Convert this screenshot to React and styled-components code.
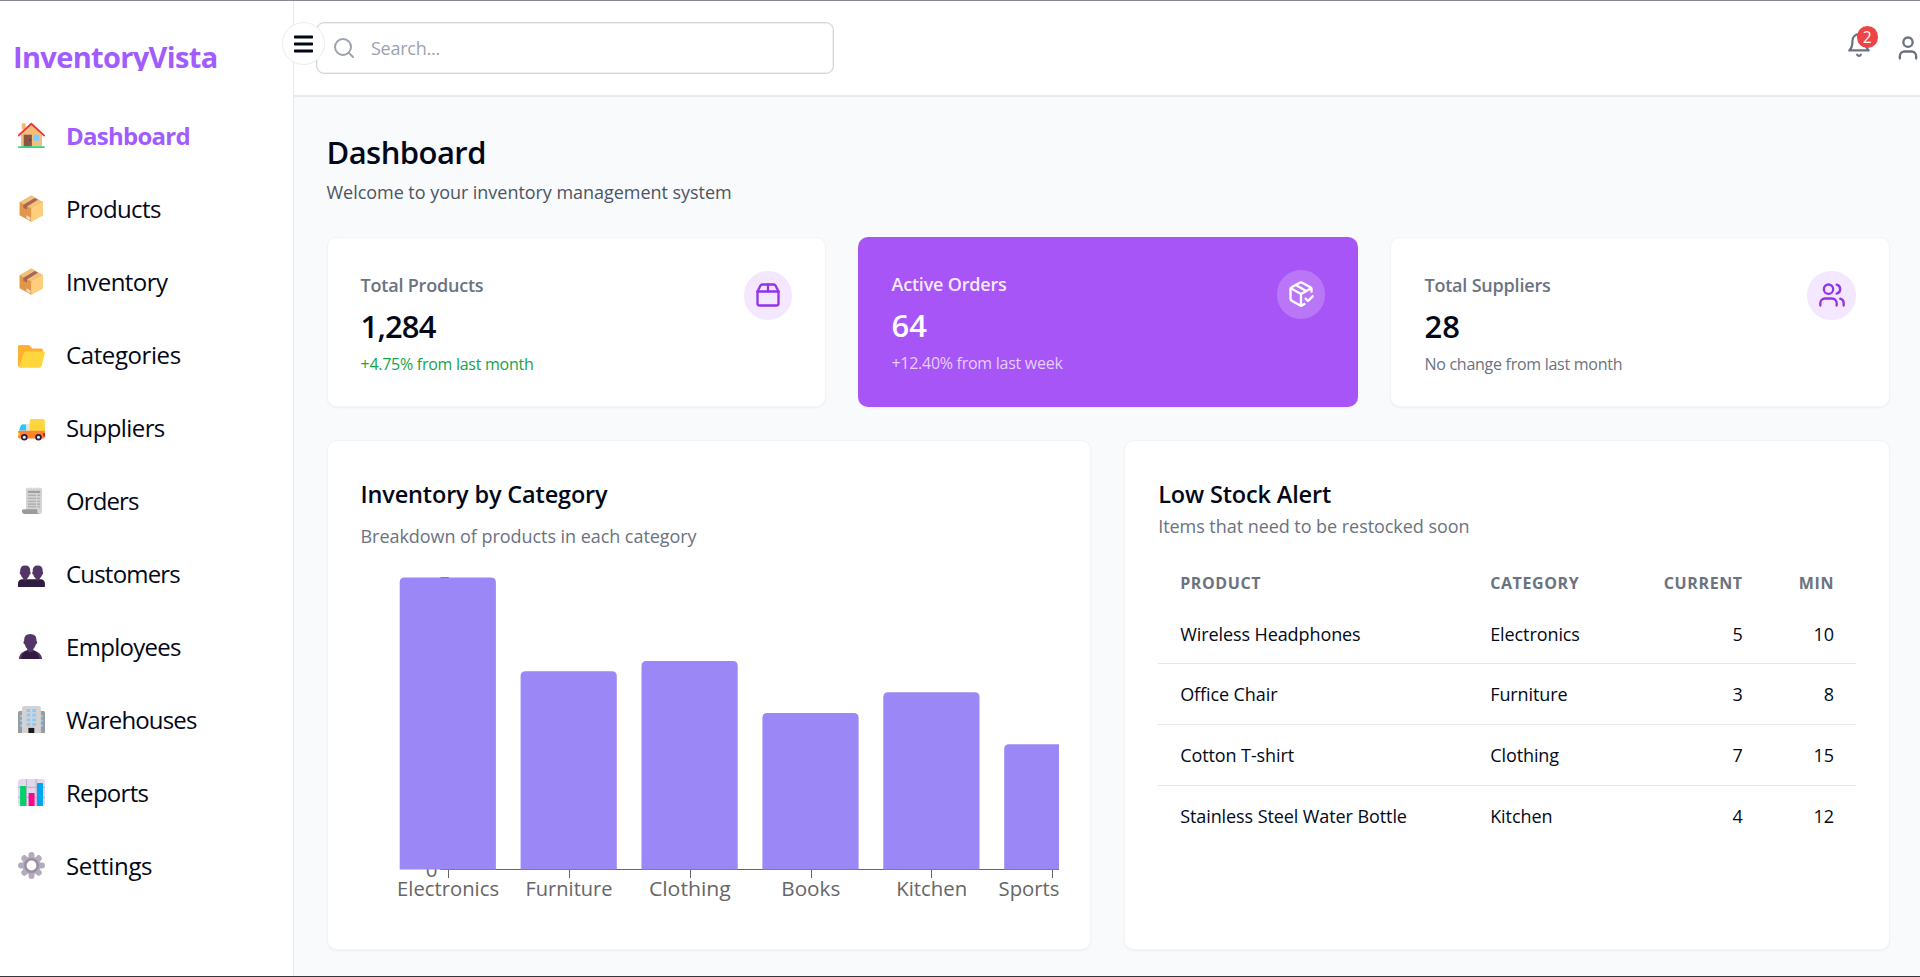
import React from "react";
import styled, { createGlobalStyle } from "styled-components";
import { Search, User, Users, PackageCheck } from "lucide-react";

const GlobalStyle = createGlobalStyle`
  *, *::before, *::after { box-sizing: border-box; }
  body {
    margin: 0;
    background: #f9fafc;
    color: #020817;
    font-family: "Segoe UI", "Open Sans", "Noto Sans", sans-serif;
  }
  h1, h2, p { margin: 0; }
`;

/* ---------- shell ---------- */

const Shell = styled.div`
  position: relative;
  display: flex;
  width: 1920px;
  height: 977px;
  overflow: hidden;
  border-top: 1px solid #8c8794;
  border-bottom: 1px solid #36363c;
  white-space: nowrap;
`;

const Sidebar = styled.aside`
  display: flex;
  flex-direction: column;
  flex: none;
  width: 294px;
  background: #fff;
  border-right: 1px solid #e8eaed;
`;

const Logo = styled.div`
  height: 30px;
  margin: 40px 0 28px 13px;
  overflow: hidden;
  color: #a15cff;
  font-size: 29px;
  font-weight: 700;
  line-height: 32px;
  letter-spacing: -0.66px;
`;

const Nav = styled.nav`
  display: flex;
  flex-direction: column;
`;

const NavItem = styled.a`
  display: flex;
  align-items: center;
  gap: 21px;
  height: 73px;
  padding-left: 18px;
  font-size: 24px;
  font-weight: ${(p) => (p.$active ? 700 : 400)};
  letter-spacing: ${(p) => p.$tracking}px;
  color: ${(p) => (p.$active ? "#a15cff" : "#020817")};
`;

const NavGlyph = styled.svg`
  flex: none;
  width: 27px;
  height: 27px;
`;

const SidebarToggle = styled.button`
  position: absolute;
  top: 21px;
  left: 282px;
  display: flex;
  align-items: center;
  justify-content: center;
  width: 43px;
  height: 43px;
  padding: 0;
  border: 1px solid #ebebee;
  border-radius: 50%;
  background: #fff;
`;

const Main = styled.main`
  display: flex;
  flex-direction: column;
  flex: 1;
  min-width: 0;
`;

const Header = styled.header`
  display: flex;
  align-items: center;
  justify-content: space-between;
  flex: none;
  height: 96px;
  padding-left: 22px;
  background: #fff;
  border-bottom: 2px solid #e9eaed;
`;

const SearchBox = styled.label`
  display: flex;
  align-items: center;
  gap: 15px;
  width: 518px;
  height: 52px;
  padding-left: 15px;
  border: 1px solid #d1d5db;
  border-radius: 8px;
  box-shadow: inset 0 0 0 0.5px #dfe2e6;
  color: #9ca3af;
  font-size: 18px;
  letter-spacing: -0.25px;
`;

const HeaderActions = styled.div`
  display: flex;
  align-items: center;
  gap: 22px;
  margin-right: -2px;
  color: #6b7280;
`;

const BellButton = styled.div`
  position: relative;
  display: flex;
  margin-bottom: 6px;
`;

const Badge = styled.span`
  position: absolute;
  top: -6px;
  left: 10.5px;
  width: 21.5px;
  height: 21.5px;
  border-radius: 50%;
  background: #ef4444;
  color: #fff;
  font-size: 15.5px;
  line-height: 22px;
  text-align: center;
`;

/* ---------- content ---------- */

const Content = styled.div`
  display: flex;
  flex-direction: column;
  flex: 1;
  padding: 34px 30px 0 32.5px;
`;

const PageTitle = styled.h1`
  font-size: 31px;
  font-weight: 600;
  line-height: 42px;
  letter-spacing: -0.55px;
`;

const PageSubtitle = styled.p`
  margin-top: 5px;
  color: #4b5563;
  font-size: 18px;
  line-height: 28px;
  letter-spacing: -0.04px;
`;

const StatGrid = styled.section`
  display: grid;
  grid-template-columns: repeat(3, 1fr);
  gap: 32.4px;
  margin-top: 31px;
`;

const PanelGrid = styled.section`
  display: grid;
  grid-template-columns: 764.5px 1fr;
  gap: 33.2px;
  margin-top: 33px;
`;

const Card = styled.article`
  padding: 33px;
  background: #fff;
  border: 1px solid #f3f4f6;
  border-radius: 10px;
  box-shadow: 0 1px 2px rgba(0, 0, 0, 0.05);
`;

const StatCard = styled(Card)`
  display: flex;
  justify-content: space-between;
  height: 170px;
  ${(p) => p.$accent && "background: #a855f7; border: 0; color: #fff;"}
`;

const StatLabel = styled.p`
  color: ${(p) => (p.$accent ? "rgba(255,255,255,0.9)" : "#6b7280")};
  font-size: 18px;
  font-weight: 600;
  line-height: 29px;
  letter-spacing: -0.2px;
`;

const StatValue = styled.p`
  margin-top: 6px;
  font-size: 31px;
  font-weight: 600;
  line-height: 40px;
  letter-spacing: ${(p) => p.$tracking}px;
`;

const noteColors = { up: "#16a34a", accent: "rgba(255,255,255,0.72)", flat: "#6b7280" };

const StatNote = styled.p`
  margin-top: 6px;
  color: ${(p) => noteColors[p.$tone]};
  font-size: 16px;
  line-height: 24px;
  letter-spacing: -0.27px;
`;

const IconCircle = styled.div`
  display: flex;
  align-items: center;
  justify-content: center;
  flex: none;
  width: 48.5px;
  height: 48.5px;
  border-radius: 50%;
  background: ${(p) => (p.$accent ? "rgba(255,255,255,0.2)" : "#f3e8ff")};
  color: ${(p) => (p.$accent ? "#fff" : "#9333ea")};
`;

const PanelCard = styled(Card)`
  display: flex;
  flex-direction: column;
  height: 510px;
  padding-top: 36.5px;
`;

const PanelTitle = styled.h2`
  font-size: 23.5px;
  font-weight: 600;
  line-height: 32px;
  letter-spacing: -0.16px;
`;

const PanelSubtitle = styled.p`
  margin-top: ${(p) => p.$gap}px;
  color: #6b7280;
  font-size: 18px;
  line-height: 28px;
  letter-spacing: -0.05px;
`;

const ChartSvg = styled.svg`
  flex: none;
  width: 698.5px;
  height: 360px;
  overflow: hidden;
  font-size: 20.5px;
`;

const Table = styled.div`
  display: flex;
  flex-direction: column;
  margin-top: 13px;
`;

const TableRow = styled.div`
  display: grid;
  grid-template-columns: 310px 173px 123.5px 1fr;
  height: 60.8px;
  padding-top: 17px;
  border-bottom: 1px solid #e5e7eb;
  font-size: 18px;
  line-height: 27px;
  letter-spacing: -0.09px;
  &:last-child { border-bottom: 0; }
`;

const TableHead = styled(TableRow)`
  height: 51px;
  padding-top: 18px;
  border-bottom: 0;
  color: #6b7280;
  font-size: 16px;
  font-weight: 700;
  line-height: 24px;
  letter-spacing: 0.6px;
`;

const Cell = styled.span`
  padding: 0 22px;
  text-align: ${(p) => (p.$numeric ? "right" : "left")};
`;

/* ---------- icons ---------- */

const glyphs = {
  house: (
    <>
      <path d="M3.7 1.3h4v6h-4z" fill="#f3b871" />
      <path d="M13.3 2.2 24 12v12.7H3V12z" fill="#f3c07b" />
      <path d="M.6 13.4 13.3 1.8 26 13.4" fill="none" stroke="#f92f35" strokeWidth="1.9" strokeLinecap="round" strokeLinejoin="round" />
      <rect x="5.7" y="12.7" width="8.2" height="12" fill="#8c5543" />
      <circle cx="12.2" cy="18.3" r=".8" fill="#5c3527" />
      <rect x="15.3" y="12.7" width="5.9" height="6" rx=".5" fill="#83cbff" />
      <rect x="0" y="24.2" width="26.8" height="1.9" rx=".9" fill="#1fe08a" />
    </>
  ),
  box: (
    <>
      <path d="M13.3.2 25 7v13.3l-11.7 6.5L1.7 20.3V7z" fill="#f3c07b" />
      <path d="M1.7 7l11.6 6.6v13.2L1.7 20.3z" fill="#e19747" />
      <path d="M25 7l-11.7 6.6v13.2L25 20.3z" fill="#ffce7c" />
      <path d="M5.4 9.8 16.8 2.9l3.2 1.8L9 11.6v3.2l-3.6-2z" fill="#a56953" />
      <path d="M8.4 20.2l4 2.2v3.2l-4-2.2z" fill="#e6dcd5" />
    </>
  ),
  folder: (
    <>
      <path d="M0 5.5Q0 4 1.5 4h8.7q1 0 1.7.8l2.4 2.7h8.9q1.8 0 1.8 1.8V14L3 26.4Q0 26.4 0 24z" fill="#ffb02e" />
      <path d="M8.3 10.4h16.8q2.2 0 1.7 2l-3.2 12.5q-.5 1.9-2.4 1.9H2.4q-1.8 0-1.2-1.9L5.9 12.2q.6-1.8 2.4-1.8z" fill="#ffd63d" />
    </>
  ),
  truck: (
    <>
      <path d="M4 10h8v9H1z" fill="#e6e6e6" />
      <rect x="11.7" y="5" width="15.2" height="14" rx="2" fill="#fcd53f" />
      <path d="M4.3 10.6h3.8v5.8H1.1l1.4-4.2q.5-1.6 1.8-1.6z" fill="#26c9fc" />
      <path d="M0 18.2q0-1.4 1.4-1.4h25.5v6q0 1.6-1.6 1.6H1.4Q0 24.4 0 23z" fill="#ff822d" />
      <path d="M0 18.6h1q.8 0 .8.9v1.4q0 .9-.8.9H0z" fill="#fcd53f" />
      <path d="M25.1 19h1.8v3.6h-1q-.8 0-.8-.8z" fill="#ca0b4a" />
      <circle cx="6.3" cy="23.3" r="3.3" fill="#321b41" />
      <circle cx="6.3" cy="23.3" r="1.5" fill="#f3eef8" />
      <circle cx="20.5" cy="23.3" r="3.3" fill="#321b41" />
      <circle cx="20.5" cy="23.3" r="1.5" fill="#f3eef8" />
    </>
  ),
  receipt: (
    <>
      <path d="M8 .3l1.3 1.4L10.6.3l1.4 1.4L13.3.3l1.4 1.4L16 .3l1.3 1.4L18.7.3 20 1.7 21.3.3l1.4 1.4L24 .3v24.4q0 2.2-2.2 2.2H14L8 22z" fill="#d3d3d3" />
      <path d="M10 4.9h12" stroke="#9b9b9b" strokeWidth="2" />
      <path d="M10 8.3h8m1.3 0H22M10 11.3h8m1.3 0H22M10 14.2h8m1.3 0H22M10 17.1h8m1.3 0H22M10 19.8h8m1.3 0H22" stroke="#a5a5a5" strokeWidth="1.1" />
      <path d="M5.8 22.3h13.4v2.2q0 2.4 2 2.4H7q-3.1 0-3.1-2.8 0-1.8 1.9-1.8z" fill="#9b9b9b" />
    </>
  ),
  people: (
    <>
      <path d="M0 26.9v-3.4q0-3.4 3.8-4.2h19.3q3.8.8 3.8 4.2v3.4z" fill="#321b41" />
      <path d="M7.2 5.4q5 0 5 5.2v1.1q.8.4.4 1.8-.2.9-.9.9-.8 2.9-2.4 3.9v1.4q-2.1 1.7-4.2 0v-1.4q-1.6-1-2.4-3.9-.7 0-.9-.9-.4-1.4.4-1.8v-1.1q0-5.2 5-5.2z" fill="#533566" />
      <path d="M19.7 5.4q5 0 5 5.2v1.1q.8.4.4 1.8-.2.9-.9.9-.8 2.9-2.4 3.9v1.4q-2.1 1.7-4.2 0v-1.4q-1.6-1-2.4-3.9-.7 0-.9-.9-.4-1.4.4-1.8v-1.1q0-5.2 5-5.2z" fill="#533566" />
    </>
  ),
  person: (
    <>
      <path d="M.9 26v-.6q.8-5.6 6.1-7.4l5.3-2 5.3 2q5.3 1.8 6.5 7.4v.6z" fill="#533566" />
      <path d="M3.3 26q.2-5.4 5.4-8.4 3.6 2.7 7.2 0 5.2 3 5.4 8.4z" fill="#321b41" />
      <path d="M12.3 1q6.2 0 6.2 6.2v.9q1 .5.5 2.2-.2 1-1.1 1-.8 3.2-2.6 4.7v2q-3 2.4-6 0v-2q-1.8-1.5-2.6-4.7-.9 0-1.1-1-.5-1.7.5-2.2v-.9Q6.1 1 12.3 1z" fill="#533566" />
    </>
  ),
  building: (
    <>
      <path d="M0 6.5Q0 5 1.5 5H5v22H0zM27 6.5Q27 5 25.5 5H22v22h5z" fill="#9b9b9b" />
      <path d="M2 9h2v2.5H2zm0 4.6h2v2.5H2zm0 4.6h2v2.5H2zM23 9h2v2.5h-2zm0 4.6h2v2.5h-2zm0 4.6h2v2.5h-2z" fill="#83cbff" />
      <path d="M4 2q0-2 2-2h14.9q2 0 2 2v25H4z" fill="#d3d3d3" />
      <path d="M8.7 3h3.5v2.9H8.7zm5.6 0h3.6v2.9h-3.6zM8.7 7.7h3.5v2.9H8.7zm5.6 0h3.6v2.9h-3.6zM8.7 12.4h3.5v2.9H8.7zm5.6 0h3.6v2.9h-3.6zM8.7 17.1h3.5V20H8.7zm5.6 0h3.6V20h-3.6z" fill="#83cbff" />
      <path d="M10.4 21.9h5.9V27h-5.9z" fill="#1c1c1c" />
    </>
  ),
  chart: (
    <>
      <rect width="27" height="27" rx="3" fill="#e1d8ec" />
      <path d="M8.5 0v27M18.2 0v27M0 8.3h27M0 18.3h27" stroke="#b9adc9" strokeWidth="1" />
      <rect x="2.1" y="7" width="6" height="20" rx=".6" fill="#00d26a" />
      <rect x="10.6" y="14" width="6" height="13" rx=".6" fill="#f70a8d" />
      <rect x="19" y="4" width="6" height="23" rx=".6" fill="#00a6ed" />
    </>
  ),
  gear: (
    <>
      <path d="M13.5 3v21M3 13.5h21M6.3 6.3l14.4 14.4M20.7 6.3 6.3 20.7" stroke="#b4acbc" strokeWidth="6" strokeLinecap="round" />
      <circle cx="13.5" cy="13.5" r="9" fill="#b4acbc" />
      <circle cx="13.5" cy="13.5" r="6.2" fill="#fff" stroke="#998ea4" strokeWidth="2.6" />
    </>
  ),
};

const PackageIcon = () => (
  <svg width="28" height="28" viewBox="0 0 24 24" fill="none" stroke="currentColor" strokeWidth="2" strokeLinecap="round" strokeLinejoin="round">
    <path d="M3 9h18v10a2 2 0 0 1-2 2H5a2 2 0 0 1-2-2V9Z" />
    <path d="m3 9 2.45-4.9A2 2 0 0 1 7.24 3h9.52a2 2 0 0 1 1.8 1.1L21 9" />
    <path d="M12 3v6" />
  </svg>
);

const BellIcon = () => (
  <svg width="26" height="26" viewBox="0 0 24 24" fill="none" stroke="currentColor" strokeWidth="2" strokeLinecap="round" strokeLinejoin="round">
    <path d="M6 8a6 6 0 0 1 12 0c0 7 3 9 3 9H3s3-2 3-9" />
    <path d="M10.3 21a1.94 1.94 0 0 0 3.4 0" />
  </svg>
);

const MenuIcon = () => (
  <svg width="19" height="18" viewBox="0 0 19 18" fill="#020817">
    <rect y=".6" width="19" height="2.8" rx=".6" />
    <rect y="7.6" width="19" height="2.8" rx=".6" />
    <rect y="14.6" width="19" height="2.8" rx=".6" />
  </svg>
);

/* ---------- data ---------- */

const navItems = [
  { label: "Dashboard", glyph: "house", tracking: -0.75, active: true },
  { label: "Products", glyph: "box", tracking: -0.6 },
  { label: "Inventory", glyph: "box", tracking: -0.55 },
  { label: "Categories", glyph: "folder", tracking: -0.4 },
  { label: "Suppliers", glyph: "truck", tracking: -0.6 },
  { label: "Orders", glyph: "receipt", tracking: -0.9 },
  { label: "Customers", glyph: "people", tracking: -0.8 },
  { label: "Employees", glyph: "person", tracking: -0.7 },
  { label: "Warehouses", glyph: "building", tracking: -0.85 },
  { label: "Reports", glyph: "chart", tracking: -0.7 },
  { label: "Settings", glyph: "gear", tracking: -0.35 },
];

const stats = [
  { label: "Total Products", value: "1,284", tracking: -0.85, note: "+4.75% from last month", tone: "up", icon: <PackageIcon /> },
  { label: "Active Orders", value: "64", tracking: 0, note: "+12.40% from last week", tone: "accent", icon: <PackageCheck size={28} />, accent: true },
  { label: "Total Suppliers", value: "28", tracking: 0, note: "No change from last month", tone: "flat", icon: <Users size={28} /> },
];

const categories = [
  { name: "Electronics", count: 140, labelWidth: 102 },
  { name: "Furniture", count: 95, labelWidth: 87 },
  { name: "Clothing", count: 100, labelWidth: 82 },
  { name: "Books", count: 75, labelWidth: 59 },
  { name: "Kitchen", count: 85, labelWidth: 71 },
  { name: "Sports", count: 60, labelWidth: 61 },
];

const lowStock = [
  ["Wireless Headphones", "Electronics", 5, 10],
  ["Office Chair", "Furniture", 3, 8],
  ["Cotton T-shirt", "Clothing", 7, 15],
  ["Stainless Steel Water Bottle", "Kitchen", 4, 12],
];

/* ---------- chart ---------- */

const AXIS_Y = 319.5;
const STEP = 120.9;
const FIRST = 86.8;
const BAR = 96.2;

function barPath(x, y, w, h, r) {
  return `M${x} ${y + h}V${y + r}q0-${r} ${r}-${r}h${w - 2 * r}q${r} 0 ${r} ${r}V${y + h}z`;
}

function CategoryChart() {
  return (
    <ChartSvg>
      <g fill="none" stroke="#666">
        <path d={`M79.5 27.5h8V${AXIS_Y}h-8`} />
        <path d={`M79.5 ${AXIS_Y}H698.5`} />
        {categories.map((c, i) => (
          <path key={c.name} d={`M${Math.min(Math.round(FIRST + STEP * i), 691) + 0.5} ${AXIS_Y}v8.5`} />
        ))}
      </g>
      <g fill="#666">
        <text x="76.5" y="326.5" textAnchor="end">0</text>
        {categories.map((c, i) => {
          const last = i === categories.length - 1;
          return (
            <text
              key={c.name}
              x={last ? 698.5 : FIRST + STEP * i + 0.3}
              y="345.5"
              textAnchor={last ? "end" : "middle"}
              textLength={c.labelWidth}
              lengthAdjust="spacingAndGlyphs"
            >
              {c.name}
            </text>
          );
        })}
      </g>
      <g fill="#9b87f5">
        {categories.map((c, i) => {
          const h = c.count * 2.086;
          return <path key={c.name} d={barPath(FIRST + STEP * i - BAR / 2, AXIS_Y - h, BAR, h, 5)} />;
        })}
      </g>
    </ChartSvg>
  );
}

export default function App() {
  return (
    <>
      <GlobalStyle />
      <Shell>
        <Sidebar>
          <Logo>InventoryVista</Logo>
          <Nav>
            {navItems.map((item) => (
              <NavItem key={item.label} $active={item.active} $tracking={item.tracking}>
                <NavGlyph viewBox="0 0 27 27">{glyphs[item.glyph]}</NavGlyph>
                {item.label}
              </NavItem>
            ))}
          </Nav>
        </Sidebar>
        <Main>
          <Header>
            <SearchBox>
              <Search size={24} />
              <span>Search...</span>
            </SearchBox>
            <HeaderActions>
              <BellButton>
                <BellIcon />
                <Badge>2</Badge>
              </BellButton>
              <User size={28} />
            </HeaderActions>
          </Header>
          <Content>
            <PageTitle>Dashboard</PageTitle>
            <PageSubtitle>Welcome to your inventory management system</PageSubtitle>
            <StatGrid>
              {stats.map((s) => (
                <StatCard key={s.label} $accent={s.accent}>
                  <div>
                    <StatLabel $accent={s.accent}>{s.label}</StatLabel>
                    <StatValue $tracking={s.tracking}>{s.value}</StatValue>
                    <StatNote $tone={s.tone}>{s.note}</StatNote>
                  </div>
                  <IconCircle $accent={s.accent}>{s.icon}</IconCircle>
                </StatCard>
              ))}
            </StatGrid>
            <PanelGrid>
              <PanelCard>
                <PanelTitle>Inventory by Category</PanelTitle>
                <PanelSubtitle $gap={12.5}>Breakdown of products in each category</PanelSubtitle>
                <CategoryChart />
              </PanelCard>
              <PanelCard>
                <PanelTitle>Low Stock Alert</PanelTitle>
                <PanelSubtitle $gap={2}>Items that need to be restocked soon</PanelSubtitle>
                <Table>
                  <TableHead>
                    <Cell>PRODUCT</Cell>
                    <Cell>CATEGORY</Cell>
                    <Cell $numeric>CURRENT</Cell>
                    <Cell $numeric>MIN</Cell>
                  </TableHead>
                  {lowStock.map(([product, category, current, min]) => (
                    <TableRow key={product}>
                      <Cell>{product}</Cell>
                      <Cell>{category}</Cell>
                      <Cell $numeric>{current}</Cell>
                      <Cell $numeric>{min}</Cell>
                    </TableRow>
                  ))}
                </Table>
              </PanelCard>
            </PanelGrid>
          </Content>
        </Main>
        <SidebarToggle>
          <MenuIcon />
        </SidebarToggle>
      </Shell>
    </>
  );
}
